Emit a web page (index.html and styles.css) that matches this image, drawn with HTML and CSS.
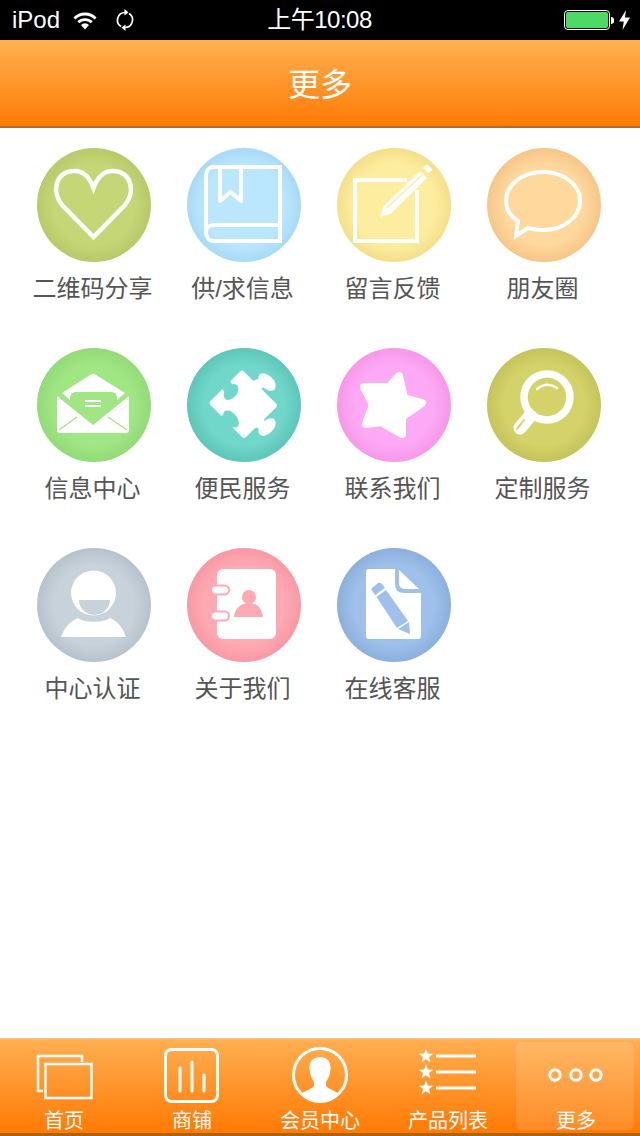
FILE: index.html
```html
<!DOCTYPE html>

<html>
    <head>
        <meta name="viewport" content="width=device-width, initial-scale=1" />
        <title>更多</title>
        <link rel="stylesheet" href="styles.css">
    </head>

<body>

    <div class="page">

        <div class="status">
            <div class="status_left">
                <span>iPod</span>
                <svg class="wifi" viewBox="0 0 24 20">
                    <path class="line" stroke-width="2.8" d="M1.4 8.4A15 15 0 0 1 22.6 8.4"/>
                    <path class="line" stroke-width="2.8" d="M5.3 12.3A9.5 9.5 0 0 1 18.7 12.3"/>
                    <path class="solid" d="M12 19.5L8 15A5.6 5.6 0 0 1 16 15Z"/>
                </svg>
                <svg class="sync" viewBox="0 0 18 22">
                    <path class="line" stroke-width="1.7" d="M9 3.5A7.6 7.6 0 0 0 5 17.5"/>
                    <path class="line" stroke-width="1.7" d="M9 18.5A7.6 7.6 0 0 0 13 4.5"/>
                    <path class="solid" d="M8.5 0L12.5 3.4L8.5 6.5Z"/>
                    <path class="solid" d="M9.5 22L5.5 18.6L9.5 15.5Z"/>
                </svg>
            </div>
            <div class="status_time">上午10:08</div>
            <div class="status_right">
                <div class="battery"><div class="battery_fill"></div></div>
                <div class="battery_nub"></div>
                <svg class="bolt" viewBox="0 0 11 20"><path class="solid" d="M7 0L0 11.5H4.8L3.5 20L11 7.5H6Z"/></svg>
            </div>
        </div>

        <div class="header">更多</div>

        <div class="menu">

            <div class="menu_item">
                <div class="badge badge--olive">
                    <svg viewBox="0 0 114 114">
                        <path class="line" stroke-width="4.5" d="M56.5 89L26 58C14 45 18 24 36 23C46 22 53 30 56.5 40C60 30 67 22 77 23C95 24 99 45 87 58Z"/>
                    </svg>
                </div>
                <div class="menu_label">二维码分享</div>
            </div>

            <div class="menu_item">
                <div class="badge badge--sky">
                    <svg viewBox="0 0 114 114">
                        <path class="line" stroke-width="4" d="M93 19H27C22 19 19 23 19 27V84C19 89 22 93 27 93H93ZM93 77H27C22 77 19 80 19 84"/>
                        <path class="line" stroke-width="4" stroke-linejoin="round" d="M33 19V53L43.5 44L54 53V19"/>
                    </svg>
                </div>
                <div class="menu_label">供/求信息</div>
            </div>

            <div class="menu_item">
                <div class="badge badge--sand">
                    <svg viewBox="0 0 114 114">
                        <path class="line" stroke-width="4" d="M70 32H18V93H80V42"/>
                        <path class="solid" d="M43 69L46.5 58L83 23L90 30L54 65.5Z"/>
                        <path class="cut_line" stroke-width="1.3" d="M50 60L85 27"/>
                        <path class="solid" d="M86 20L90 16L95.5 21.5L91.5 25.5Z"/>
                    </svg>
                </div>
                <div class="menu_label">留言反馈</div>
            </div>

            <div class="menu_item">
                <div class="badge badge--peach">
                    <svg viewBox="0 0 114 114">
                        <path class="line" stroke-width="4" d="M31 73C23 68 19 61 19 53C19 37 35 24 56 24C77 24 93 37 93 53C93 69 77 82 56 82C51 82 46 81.5 41 80L29 88Z"/>
                    </svg>
                </div>
                <div class="menu_label">朋友圈</div>
            </div>

            <div class="menu_item">
                <div class="badge badge--green">
                    <svg viewBox="0 0 114 114">
                        <path class="solid" d="M25 45L53 27Q56 25 59 27L88 45L80 52H33Z"/>
                        <path class="solid" d="M20 48L56 77L92 48V82Q92 85 89 85H23Q20 85 20 82Z"/>
                        <path class="cut" d="M33 50Q33 44 39 44H74Q80 44 80 50V57L60 71Q56 73 52 71L33 57Z"/>
                        <path class="line" stroke-width="1.8" d="M48 53H64M48 58H64"/>
                        <path class="cut_line" stroke-width="1.3" d="M22 82L40 69M71 69L90 82"/>
                    </svg>
                </div>
                <div class="menu_label">信息中心</div>
            </div>

            <div class="menu_item">
                <div class="badge badge--teal">
                    <svg viewBox="0 0 114 114">
                        <path class="solid" d="M53 23.5Q55 21.5 57 23.5L89 55.5Q91 57.5 89 59.5L59 89Q57 91 55 89L23.5 57Q21.5 55 23.5 53Z"/>
                        <ellipse class="solid" cx="80" cy="34" rx="10.5" ry="6.5" transform="rotate(45 80 34)"/>
                        <ellipse class="solid" cx="80" cy="79" rx="10.5" ry="6.5" transform="rotate(-45 80 79)"/>
                        <path class="solid" d="M66 33L74 41L79 37L73 30Z"/>
                        <path class="solid" d="M68 79L76 71L80 76L75 82Z"/>
                        <ellipse class="cut" cx="44" cy="44" rx="9" ry="6" transform="rotate(-50 44 44)"/>
                        <ellipse class="cut" cx="44" cy="71" rx="10" ry="6" transform="rotate(50 44 71)"/>
                        <path class="cut" d="M35 41L43 33L47 39L40 47Z"/>
                        <path class="cut" d="M34 68L42 80L47 74L40 65Z"/>
                    </svg>
                </div>
                <div class="menu_label">便民服务</div>
            </div>

            <div class="menu_item">
                <div class="badge badge--pink">
                    <svg viewBox="0 0 114 114">
                        <path class="solid star_round" d="M62 28L67 50L85 55L65 69L65 86L44 74L29 76L36 57L27 39L52 39Z"/>
                    </svg>
                </div>
                <div class="menu_label">联系我们</div>
            </div>

            <div class="menu_item">
                <div class="badge badge--mustard">
                    <svg viewBox="0 0 114 114">
                        <circle class="line" stroke-width="7.5" cx="60" cy="49" r="23"/>
                        <path class="line" stroke-width="2.5" stroke-linecap="round" d="M50 41Q60 33 70 40"/>
                        <path class="line" stroke-width="13" stroke-linecap="round" d="M43 68L33 80"/>
                        <path class="cut_line" stroke-width="2" stroke-linecap="round" d="M37 72L30 81"/>
                    </svg>
                </div>
                <div class="menu_label">定制服务</div>
            </div>

            <div class="menu_item">
                <div class="badge badge--grey">
                    <svg viewBox="0 0 114 114">
                        <circle class="solid" cx="56.5" cy="45" r="22.5"/>
                        <path class="cut" d="M42 52H73A15.5 15 0 0 1 42 52Z"/>
                        <path class="solid" d="M24 89C28 78 34 73 41 70C47 75 66 75 73 70C80 73 85 78 89 89Z"/>
                    </svg>
                </div>
                <div class="menu_label">中心认证</div>
            </div>

            <div class="menu_item">
                <div class="badge badge--rose">
                    <svg viewBox="0 0 114 114">
                        <rect class="solid" x="30" y="21" width="59" height="70" rx="6"/>
                        <rect class="solid pill" x="24" y="37.5" width="18" height="9" rx="4.5"/>
                        <rect class="solid pill" x="24" y="63.5" width="18" height="9" rx="4.5"/>
                        <circle class="cut" cx="62" cy="49" r="7"/>
                        <path class="cut" d="M47 69C48 60 54 55 62 55C70 55 75 60 76 69Z"/>
                    </svg>
                </div>
                <div class="menu_label">关于我们</div>
            </div>

            <div class="menu_item">
                <div class="badge badge--blue">
                    <svg viewBox="0 0 114 114">
                        <path class="solid" d="M32 21H58V36Q58 45 67 45H84V88Q84 91 81 91H32Q29 91 29 88V24Q29 21 32 21Z"/>
                        <path class="solid" d="M62 22L82 41H69Q62 41 62 35Z"/>
                        <path class="cut" d="M34 41L41 35Q43 34 45 36L48 40L38 47Z"/>
                        <path class="cut" d="M39.5 49L49 42L71 73L60 80Z"/>
                        <path class="cut" d="M61 81L72 74L73 86Z"/>
                    </svg>
                </div>
                <div class="menu_label">在线客服</div>
            </div>

        </div>

        <div class="tabbar">

            <div class="tab">
                <svg class="tab_icon" viewBox="0 0 64 60">
                    <path class="line" stroke-width="2.5" d="M11 46H6V11H50V17"/>
                    <rect class="line" stroke-width="2.5" x="13.5" y="19" width="46" height="34"/>
                </svg>
                <div class="tab_label">首页</div>
            </div>

            <div class="tab">
                <svg class="tab_icon" viewBox="0 0 64 60">
                    <rect class="line" stroke-width="3" x="5.5" y="4.5" width="52" height="52" rx="6"/>
                    <path class="line" stroke-width="3" stroke-linecap="round" d="M20 23V46M32 17V46M44 30V46"/>
                </svg>
                <div class="tab_label">商铺</div>
            </div>

            <div class="tab">
                <svg class="tab_icon" viewBox="0 0 64 60">
                    <circle class="line" stroke-width="3" cx="32" cy="30" r="26.5"/>
                    <path class="solid" d="M32 12C40 12 43 18 42.5 24C42 30 40 34 38 37V41C40 44 48 46 51 49A26 26 0 0 1 13 49C16 46 24 44 26 41V37C24 34 22 30 21.5 24C21 18 24 12 32 12Z"/>
                </svg>
                <div class="tab_label">会员中心</div>
            </div>

            <div class="tab">
                <svg class="tab_icon" viewBox="0 0 64 60">
                    <defs>
                        <polygon id="tab_star" class="solid" points="0,-7.5 1.9,-2.5 7.3,-2.3 3,1 4.5,6.2 0,3.2 -4.5,6.2 -3,1 -7.3,-2.3 -1.9,-2.5"/>
                    </defs>
                    <use href="#tab_star" x="10" y="11"/>
                    <use href="#tab_star" x="10" y="27"/>
                    <use href="#tab_star" x="10" y="43"/>
                    <path class="line" stroke-width="3" d="M20 11H60M20 27H60M20 43H60"/>
                </svg>
                <div class="tab_label">产品列表</div>
            </div>

            <div class="tab tab--on">
                <svg class="tab_icon" viewBox="0 0 64 60">
                    <circle class="line" stroke-width="3" cx="11" cy="30" r="5.2"/>
                    <circle class="line" stroke-width="3" cx="32" cy="30" r="5.2"/>
                    <circle class="line" stroke-width="3" cx="52" cy="30" r="5.2"/>
                </svg>
                <div class="tab_label">更多</div>
            </div>

        </div>

    </div>

</body>

</html>
```

FILE: styles.css
```css
body {
    margin: 0;
    background-color: white;
    font-family: "Liberation Sans", "Noto Sans CJK SC", sans-serif;
}

.page {
    height: 1136px;
    display: flex;
    flex-direction: column;
    overflow: hidden;
}

/* shared svg bits */
.line {
    fill: none;
    stroke: white;
}

.solid {
    fill: white;
}

.cut {
    fill: var(--inner);
}

.cut_line {
    fill: none;
    stroke: var(--inner);
}

/* status bar */
.status {
    height: 40px;
    flex: none;
    display: flex;
    align-items: center;
    background-color: black;
    color: white;
    font-size: 24px;
}

.status span,
.status_time {
    line-height: 42px;
}

.status_left {
    flex: 1;
    display: flex;
    align-items: center;
    padding-left: 12px;
}

.status_time {
    flex: none;
    margin-right: 3px;
    letter-spacing: -0.5px;
}

.status_right {
    flex: 1;
    display: flex;
    align-items: center;
    justify-content: flex-end;
    padding-right: 10px;
}

.wifi {
    width: 24px;
    height: 20px;
    margin-left: 13px;
}

.sync {
    width: 18px;
    height: 22px;
    margin-left: 19px;
}

.battery {
    width: 42px;
    height: 16px;
    padding: 1px;
    border: 1px solid white;
    border-radius: 4px;
}

.battery_fill {
    height: 100%;
    background-color: #4cd964;
    border-radius: 2px;
}

.battery_nub {
    width: 3px;
    height: 7px;
    margin-left: 1px;
    background-color: white;
    border-radius: 0 3px 3px 0;
}

.bolt {
    width: 11px;
    height: 20px;
    margin-left: 5px;
}

/* title */
.header {
    height: 86px;
    flex: none;
    border-bottom: 2px solid #a8702c;
    background: linear-gradient(#ffb152, #ff7a04);
    color: white;
    font-size: 32px;
    line-height: 90px;
    text-align: center;
}

/* icon grid */
.menu {
    flex: 1;
    display: grid;
    grid-template-columns: repeat(4, 150px);
    grid-auto-rows: 200px;
    padding: 20px 0 0 19px;
}

.menu_item {
    display: flex;
    flex-direction: column;
    align-items: center;
}

.badge {
    width: 114px;
    height: 114px;
    border-radius: 50%;
    background: radial-gradient(circle closest-side, var(--inner) 70%, var(--outer) 100%);
}

.badge svg {
    display: block;
    width: 114px;
    height: 114px;
}

.badge--olive { --inner: #c5d676; --outer: #b7c96a; }
.badge--sky { --inner: #bbe7fe; --outer: #a8daf6; }
.badge--sand { --inner: #fdee9f; --outer: #f4df8a; }
.badge--peach { --inner: #fed89d; --outer: #f6c588; }
.badge--green { --inner: #a1e684; --outer: #92db77; }
.badge--teal { --inner: #70d7ca; --outer: #5ec6b9; }
.badge--pink { --inner: #fea9f5; --outer: #f598e8; }
.badge--mustard { --inner: #d3d36a; --outer: #c4c45b; }
.badge--grey { --inner: #c8d2db; --outer: #b6c2cd; }
.badge--rose { --inner: #ffa9b3; --outer: #f899a4; }
.badge--blue { --inner: #9ec0ea; --outer: #8cafdd; }

.star_round {
    stroke: white;
    stroke-width: 8;
    stroke-linejoin: round;
}

.pill {
    stroke: var(--inner);
    stroke-width: 2;
}

.menu_label {
    margin-top: 12px;
    padding-right: 3px;
    color: #555;
    font-size: 24px;
    line-height: 30px;
}

/* bottom tabs */
.tabbar {
    height: 95px;
    flex: none;
    display: flex;
    border-bottom: 3px solid #a8640f;
    background: linear-gradient(#ffc070 0, #ffae50 3px, #ff7a04 100%);
}

.tab {
    width: 128px;
    padding-top: 7px;
    position: relative;
    display: flex;
    flex-direction: column;
    align-items: center;
}

.tab--on::before {
    content: "";
    position: absolute;
    left: 4px;
    right: 6px;
    top: 4px;
    bottom: 3px;
    background-color: rgba(255, 255, 255, 0.13);
    border-radius: 6px;
}

.tab_icon {
    width: 64px;
    height: 60px;
    flex: none;
    position: relative;
}

.tab_label {
    position: relative;
    color: white;
    font-size: 20px;
    line-height: 24px;
    margin-top: 4px;
}
```
